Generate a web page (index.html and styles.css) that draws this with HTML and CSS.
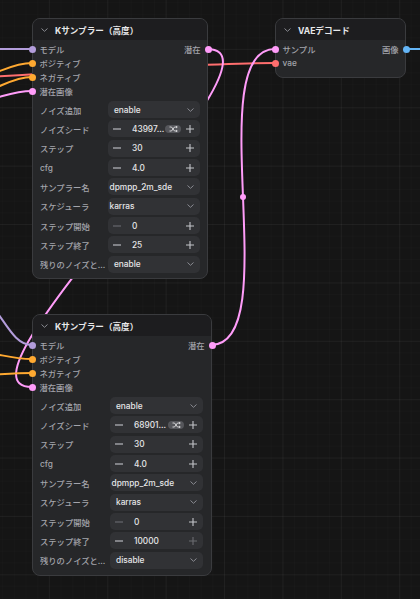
FILE: index.html
```html
<!DOCTYPE html>
<html lang="ja">
<head>
<meta charset="utf-8">
<title>KSampler</title>
<link rel="stylesheet" href="styles.css">
</head>
<body>
<div class="canvas">
  <svg class="links" width="420" height="599" viewBox="0 0 420 599">
    <path class="l-model" d="M -60 49 L 32 49"/>
    <path class="l-cond" d="M -100 110 C -65 110, -3 63, 32 63"/>
    <path class="l-vae" d="M -200 85 C -81 85, 156 63, 275 63"/>
    <path class="l-cond" d="M -100 130 C -65 130, -3 77, 32 77"/>
    <path class="l-latent" d="M -100 125 C -65 125, -3 91, 32 91"/>
    <path class="l-latent" d="M 207 49 C 302 49, -63 387, 32 387"/>
    <path class="l-latent" d="M 211 345 C 286.7 345, 199.3 49, 275 49"/>
    <path class="l-model" d="M -25 288 C 3 310, 10 345, 32 345"/>
    <path class="l-cond" d="M -100 335 C -60 335, -5 359, 32 359"/>
    <path class="l-cond" d="M -100 380 C -60 380, -5 373, 32 373"/>
    <path class="l-image" d="M 405 49 L 430 49"/>
    <circle class="m-latent" cx="243" cy="197" r="3"/>
    <circle class="m-latent" cx="119.6" cy="218" r="3"/>
  </svg>

  <!-- Node 1 -->
  <div class="node n1">
    <div class="hdr">
      <svg class="chev" width="7" height="4" viewBox="0 0 7 4"><path d="M0.5 0.5 L3.5 3.3 L6.5 0.5"/></svg>
      <span class="title">Kサンプラー（高度）</span>
    </div>
    <div class="slots">
      <div class="col-in">
        <div class="slot"><i class="dot c-model"></i><span>モデル</span></div>
        <div class="slot"><i class="dot c-cond"></i><span>ポジティブ</span></div>
        <div class="slot"><i class="dot c-cond"></i><span>ネガティブ</span></div>
        <div class="slot"><i class="dot c-latent"></i><span>潜在画像</span></div>
      </div>
      <div class="col-out">
        <div class="slot out"><span>潜在</span><i class="dot c-latent"></i></div>
      </div>
    </div>
    <div class="widgets">
      <div class="w"><span class="lbl">ノイズ追加</span><div class="box combo"><span class="val">enable</span><svg class="dd" width="7" height="4" viewBox="0 0 7 4"><path d="M0.5 0.5 L3.5 3.3 L6.5 0.5"/></svg></div></div>
      <div class="w"><span class="lbl">ノイズシード</span><div class="box num"><svg class="mi" width="8" height="8" viewBox="0 0 8 8"><path d="M0 4 H8"/></svg><span class="val">43997...</span><span class="shuf"><svg width="9" height="6" viewBox="0 0 9 6"><path d="M0.5 1 H2.5 L5.5 5 H8 M0.5 5 H2.5 L5.5 1 H8 M7 0 L8.3 1 L7 2 M7 4 L8.3 5 L7 6"/></svg></span><svg class="pl" width="8" height="8" viewBox="0 0 8 8"><path d="M0 4 H8 M4 0 V8"/></svg></div></div>
      <div class="w"><span class="lbl">ステップ</span><div class="box num"><svg class="mi" width="8" height="8" viewBox="0 0 8 8"><path d="M0 4 H8"/></svg><span class="val">30</span><svg class="pl" width="8" height="8" viewBox="0 0 8 8"><path d="M0 4 H8 M4 0 V8"/></svg></div></div>
      <div class="w"><span class="lbl">cfg</span><div class="box num"><svg class="mi" width="8" height="8" viewBox="0 0 8 8"><path d="M0 4 H8"/></svg><span class="val">4.0</span><svg class="pl" width="8" height="8" viewBox="0 0 8 8"><path d="M0 4 H8 M4 0 V8"/></svg></div></div>
      <div class="w"><span class="lbl">サンプラー名</span><div class="box combo wide"><span class="val">dpmpp_2m_sde</span><svg class="dd" width="7" height="4" viewBox="0 0 7 4"><path d="M0.5 0.5 L3.5 3.3 L6.5 0.5"/></svg></div></div>
      <div class="w"><span class="lbl">スケジューラ</span><div class="box combo wide"><span class="val">karras</span><svg class="dd" width="7" height="4" viewBox="0 0 7 4"><path d="M0.5 0.5 L3.5 3.3 L6.5 0.5"/></svg></div></div>
      <div class="w"><span class="lbl">ステップ開始</span><div class="box num"><svg class="mi dim" width="8" height="8" viewBox="0 0 8 8"><path d="M0 4 H8"/></svg><span class="val">0</span><svg class="pl" width="8" height="8" viewBox="0 0 8 8"><path d="M0 4 H8 M4 0 V8"/></svg></div></div>
      <div class="w"><span class="lbl">ステップ終了</span><div class="box num"><svg class="mi" width="8" height="8" viewBox="0 0 8 8"><path d="M0 4 H8"/></svg><span class="val">25</span><svg class="pl" width="8" height="8" viewBox="0 0 8 8"><path d="M0 4 H8 M4 0 V8"/></svg></div></div>
      <div class="w"><span class="lbl">残りのノイズと...</span><div class="box combo"><span class="val">enable</span><svg class="dd" width="7" height="4" viewBox="0 0 7 4"><path d="M0.5 0.5 L3.5 3.3 L6.5 0.5"/></svg></div></div>
    </div>
  </div>

  <!-- VAE decode -->
  <div class="node vae">
    <div class="hdr">
      <svg class="chev" width="7" height="4" viewBox="0 0 7 4"><path d="M0.5 0.5 L3.5 3.3 L6.5 0.5"/></svg>
      <span class="title">VAEデコード</span>
    </div>
    <div class="slots">
      <div class="col-in">
        <div class="slot"><i class="dot c-latent"></i><span>サンプル</span></div>
        <div class="slot"><i class="dot c-vae"></i><span>vae</span></div>
      </div>
      <div class="col-out">
        <div class="slot out"><span>画像</span><i class="dot c-image"></i></div>
      </div>
    </div>
  </div>

  <!-- Node 2 -->
  <div class="node n2">
    <div class="hdr">
      <svg class="chev" width="7" height="4" viewBox="0 0 7 4"><path d="M0.5 0.5 L3.5 3.3 L6.5 0.5"/></svg>
      <span class="title">Kサンプラー（高度）</span>
    </div>
    <div class="slots">
      <div class="col-in">
        <div class="slot"><i class="dot c-model"></i><span>モデル</span></div>
        <div class="slot"><i class="dot c-cond"></i><span>ポジティブ</span></div>
        <div class="slot"><i class="dot c-cond"></i><span>ネガティブ</span></div>
        <div class="slot"><i class="dot c-latent"></i><span>潜在画像</span></div>
      </div>
      <div class="col-out">
        <div class="slot out"><span>潜在</span><i class="dot c-latent"></i></div>
      </div>
    </div>
    <div class="widgets">
      <div class="w"><span class="lbl">ノイズ追加</span><div class="box combo"><span class="val">enable</span><svg class="dd" width="7" height="4" viewBox="0 0 7 4"><path d="M0.5 0.5 L3.5 3.3 L6.5 0.5"/></svg></div></div>
      <div class="w"><span class="lbl">ノイズシード</span><div class="box num"><svg class="mi" width="8" height="8" viewBox="0 0 8 8"><path d="M0 4 H8"/></svg><span class="val">68901...</span><span class="shuf"><svg width="9" height="6" viewBox="0 0 9 6"><path d="M0.5 1 H2.5 L5.5 5 H8 M0.5 5 H2.5 L5.5 1 H8 M7 0 L8.3 1 L7 2 M7 4 L8.3 5 L7 6"/></svg></span><svg class="pl" width="8" height="8" viewBox="0 0 8 8"><path d="M0 4 H8 M4 0 V8"/></svg></div></div>
      <div class="w"><span class="lbl">ステップ</span><div class="box num"><svg class="mi" width="8" height="8" viewBox="0 0 8 8"><path d="M0 4 H8"/></svg><span class="val">30</span><svg class="pl" width="8" height="8" viewBox="0 0 8 8"><path d="M0 4 H8 M4 0 V8"/></svg></div></div>
      <div class="w"><span class="lbl">cfg</span><div class="box num"><svg class="mi" width="8" height="8" viewBox="0 0 8 8"><path d="M0 4 H8"/></svg><span class="val">4.0</span><svg class="pl" width="8" height="8" viewBox="0 0 8 8"><path d="M0 4 H8 M4 0 V8"/></svg></div></div>
      <div class="w"><span class="lbl">サンプラー名</span><div class="box combo wide"><span class="val">dpmpp_2m_sde</span><svg class="dd" width="7" height="4" viewBox="0 0 7 4"><path d="M0.5 0.5 L3.5 3.3 L6.5 0.5"/></svg></div></div>
      <div class="w"><span class="lbl">スケジューラ</span><div class="box combo"><span class="val">karras</span><svg class="dd" width="7" height="4" viewBox="0 0 7 4"><path d="M0.5 0.5 L3.5 3.3 L6.5 0.5"/></svg></div></div>
      <div class="w"><span class="lbl">ステップ開始</span><div class="box num"><svg class="mi dim" width="8" height="8" viewBox="0 0 8 8"><path d="M0 4 H8"/></svg><span class="val">0</span><svg class="pl" width="8" height="8" viewBox="0 0 8 8"><path d="M0 4 H8 M4 0 V8"/></svg></div></div>
      <div class="w"><span class="lbl">ステップ終了</span><div class="box num"><svg class="mi" width="8" height="8" viewBox="0 0 8 8"><path d="M0 4 H8"/></svg><span class="val">10000</span><svg class="pl dim" width="8" height="8" viewBox="0 0 8 8"><path d="M0 4 H8 M4 0 V8"/></svg></div></div>
      <div class="w"><span class="lbl">残りのノイズと...</span><div class="box combo"><span class="val">disable</span><svg class="dd" width="7" height="4" viewBox="0 0 7 4"><path d="M0.5 0.5 L3.5 3.3 L6.5 0.5"/></svg></div></div>
    </div>
  </div>
</div>
</body>
</html>
```

FILE: styles.css
```css
* { box-sizing: border-box; }
html, body { margin: 0; padding: 0; }
body {
  background: #151515;
  font-family: "Inter", "Noto Sans CJK JP", sans-serif;
  font-size: 8.3px;
  font-weight: 500;
}
.canvas {
  position: relative;
  width: 420px;
  height: 599px;
  overflow: hidden;
  background-color: #151515;
  background-image:
    linear-gradient(to right, rgba(255,255,255,0.035) 1px, transparent 1px),
    linear-gradient(to bottom, rgba(255,255,255,0.035) 1px, transparent 1px),
    linear-gradient(to right, rgba(255,255,255,0.012) 1px, transparent 1px),
    linear-gradient(to bottom, rgba(255,255,255,0.012) 1px, transparent 1px);
  background-size: 58.4px 58.4px, 58.4px 58.4px, 11.68px 11.68px, 11.68px 11.68px;
  background-position: 48.9px 48.9px, 48.9px 48.9px, 48.9px 48.9px, 48.9px 48.9px;
}
.links {
  position: absolute;
  left: 0; top: 0;
}
.links path { fill: none; stroke-width: 2; }
.l-model { stroke: #b39ddb; }
.l-cond { stroke: #ffa931; }
.l-latent { stroke: #ff9cf9; }
.l-vae { stroke: #ff6e6e; }
.l-image { stroke: #64b5f6; }
.m-latent { fill: #ff9cf9; }

.node {
  position: absolute;
  background: #262729;
  border: 1px solid #3a3b3e;
  border-radius: 8px;
  display: flex;
  flex-direction: column;
  color: #a3a4ab;
}
.n1 { left: 32px; top: 18px; width: 176px; height: 261px; }
.n2 { left: 32px; top: 314px; width: 180px; height: 262px; }
.vae { left: 275px; top: 18px; width: 131px; height: 60px; }

.hdr {
  height: 21px;
  flex: none;
  background: #1d1d1f;
  border-radius: 7px 7px 0 0;
  display: flex;
  align-items: center;
  padding-left: 8px;
  gap: 7px;
}
.chev path, .dd path { fill: none; stroke: #8a8b92; stroke-width: 1; }
.title {
  color: #e8e8ea;
  font-weight: 700;
  font-size: 8.6px;
}
.slots {
  display: flex;
  justify-content: space-between;
  padding-top: 2px;
  flex: none;
}
.col-in, .col-out { display: flex; flex-direction: column; }
.slot {
  height: 14px;
  display: flex;
  align-items: center;
  gap: 4px;
}
.dot {
  display: block;
  width: 7px;
  height: 7px;
  border-radius: 50%;
  flex: none;
}
.col-in .dot { margin-left: -4.5px; }
.col-out .dot { margin-right: -4.5px; }
.c-model { background: #b39ddb; }
.c-cond { background: #ffa931; }
.c-latent { background: #ff9cf9; }
.c-vae { background: #ff6e6e; }
.c-image { background: #64b5f6; }

.widgets {
  display: flex;
  flex-direction: column;
  gap: 2.35px;
  margin-top: 3px;
  padding: 0 7px 0 7px;
}
.n2 .widgets { padding-right: 8px; }
.w {
  height: 17px;
  display: flex;
  align-items: center;
}
.lbl {
  width: 68px;
  flex: none;
  white-space: nowrap;
  overflow: hidden;
}
.n2 .lbl { width: 70px; }
.box {
  flex: 1;
  height: 17px;
  background: #313235;
  border-radius: 5px;
  display: flex;
  align-items: center;
  color: #e6e6e8;
}
.combo { padding: 0 6px 0 6px; justify-content: space-between; }
.combo.wide { padding-left: 1.5px; }
.num { padding: 0 6px 0 5px; }
.num .val { margin-left: 11px; flex: 1; }
.mi path, .pl path { stroke: #c4c5ca; stroke-width: 1.1; fill: none; }
.mi.dim path, .pl.dim path { stroke: #6b6c71; }
.shuf {
  width: 16px;
  height: 8px;
  border-radius: 4px;
  background: #55565b;
  display: flex;
  align-items: center;
  justify-content: center;
  margin-right: 5px;
}
.shuf path { fill: none; stroke: #e0e0e2; stroke-width: 0.9; }
```
